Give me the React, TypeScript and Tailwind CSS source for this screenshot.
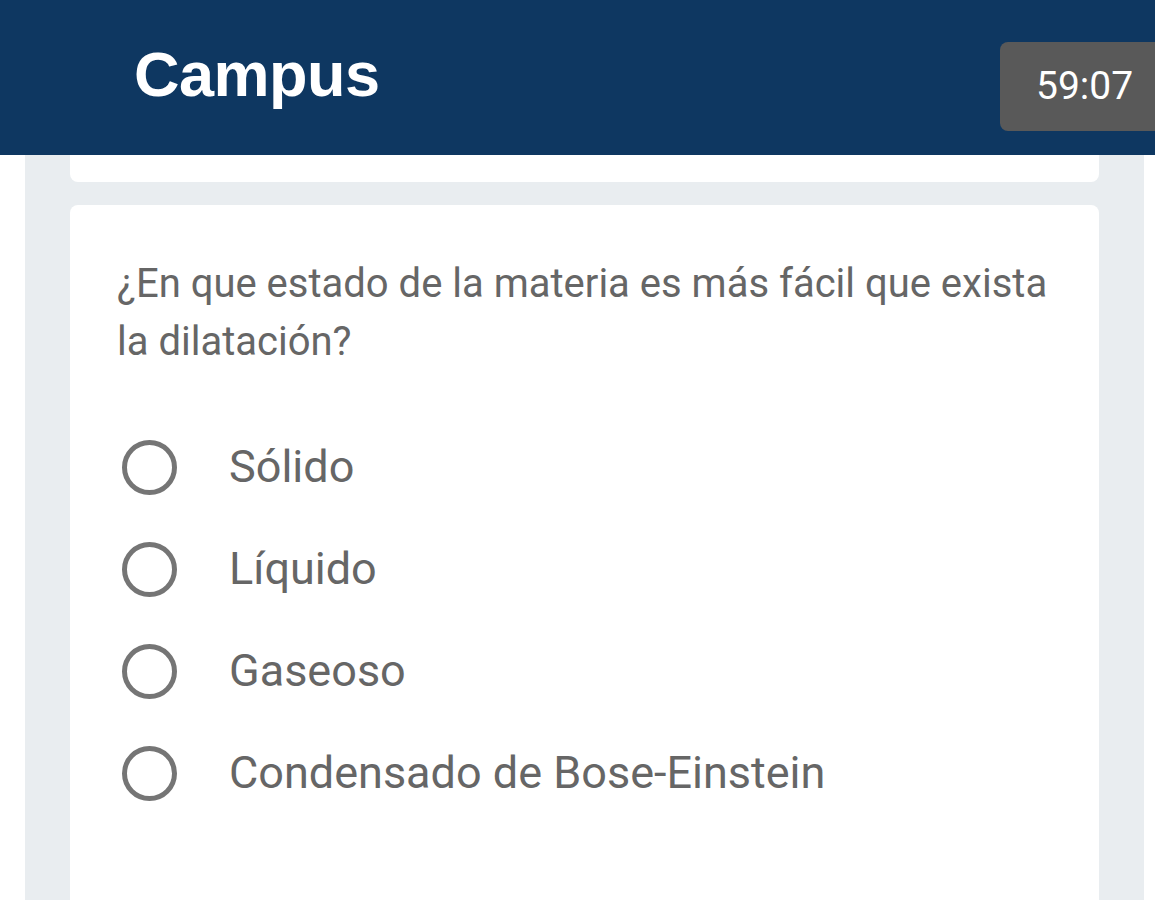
import React from "react";

const options = ["Sólido", "Líquido", "Gaseoso", "Condensado de Bose-Einstein"];

export default function App() {
  return (
    <div className="w-[1155px] h-[900px] overflow-hidden bg-white" style={{ fontFamily: "Roboto, 'Noto Sans', sans-serif" }}>
      <header className="h-[155px] bg-[#0e3761] flex items-start justify-between relative z-10">
        <div className="pl-[134px] pt-[36px] text-white text-[63px] font-bold leading-[76px] tracking-[-0.5px]" style={{ fontFamily: "'Liberation Sans', Arial, sans-serif" }}>
          Campus
        </div>
        <div className="mt-[42px] w-[165px] h-[89px] -mr-[10px] bg-[#595959] rounded-[8px] flex items-center pl-[36px] text-white text-[39px]">
          59:07
        </div>
      </header>
      <main className="mx-[25px] w-[1119px] h-[745px] bg-[#e9edf0] px-[45px] flex flex-col">
        <div className="h-[27px] bg-white rounded-b-[8px]" />
        <div className="mt-[23px] flex-1 bg-white rounded-t-[8px] px-[47px] pt-[50px]">
          <p className="text-[40px] leading-[58px] text-[#666666]">
            ¿En que estado de la materia es más fácil que exista la dilatación?
          </p>
          <div className="mt-[45px] flex flex-col">
            {options.map((o) => (
              <label key={o} className="h-[102px] flex items-center">
                <span className="ml-[5px] w-[55px] h-[55px] rounded-full border-[5px] border-[#757575] shrink-0" />
                <span className="ml-[52px] text-[45px] text-[#666666]">{o}</span>
              </label>
            ))}
          </div>
        </div>
      </main>
    </div>
  );
}
